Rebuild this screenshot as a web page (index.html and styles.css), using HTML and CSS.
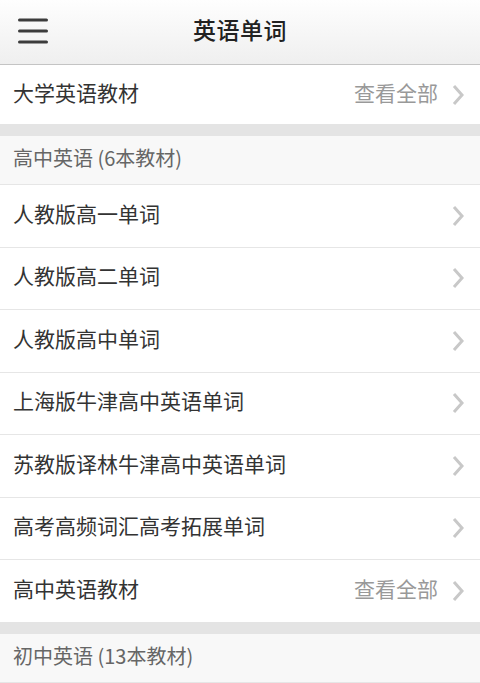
FILE: index.html
```html
<!DOCTYPE html>
<html lang="zh-CN">
<head>
<meta charset="utf-8">
<title>英语单词</title>
<link rel="stylesheet" href="styles.css">
</head>
<body>
<header class="topbar">
  <div class="menu">
    <svg width="30" height="26" viewBox="0 0 30 26">
      <rect x="0" y="0.5" width="30" height="3" rx="1.5" fill="#3c3c3c"/>
      <rect x="0" y="11.5" width="30" height="3" rx="1.5" fill="#3c3c3c"/>
      <rect x="0" y="22.5" width="30" height="3" rx="1.5" fill="#3c3c3c"/>
    </svg>
  </div>
  <h1 class="title">英语单词</h1>
</header>

<div class="row first">
  <span class="label">大学英语教材</span>
  <span class="more">查看全部</span>
  <svg class="chev" width="12" height="22" viewBox="0 0 12 22"><path d="M2 2 L10 11 L2 20" fill="none" stroke="#c8c8c8" stroke-width="3"/></svg>
</div>

<div class="band"></div>
<div class="section">高中英语 (6本教材)</div>

<div class="row"><span class="label">人教版高一单词</span><svg class="chev" width="12" height="22" viewBox="0 0 12 22"><path d="M2 2 L10 11 L2 20" fill="none" stroke="#c8c8c8" stroke-width="3"/></svg></div>
<div class="row"><span class="label">人教版高二单词</span><svg class="chev" width="12" height="22" viewBox="0 0 12 22"><path d="M2 2 L10 11 L2 20" fill="none" stroke="#c8c8c8" stroke-width="3"/></svg></div>
<div class="row"><span class="label">人教版高中单词</span><svg class="chev" width="12" height="22" viewBox="0 0 12 22"><path d="M2 2 L10 11 L2 20" fill="none" stroke="#c8c8c8" stroke-width="3"/></svg></div>
<div class="row"><span class="label">上海版牛津高中英语单词</span><svg class="chev" width="12" height="22" viewBox="0 0 12 22"><path d="M2 2 L10 11 L2 20" fill="none" stroke="#c8c8c8" stroke-width="3"/></svg></div>
<div class="row"><span class="label">苏教版译林牛津高中英语单词</span><svg class="chev" width="12" height="22" viewBox="0 0 12 22"><path d="M2 2 L10 11 L2 20" fill="none" stroke="#c8c8c8" stroke-width="3"/></svg></div>
<div class="row"><span class="label">高考高频词汇高考拓展单词</span><svg class="chev" width="12" height="22" viewBox="0 0 12 22"><path d="M2 2 L10 11 L2 20" fill="none" stroke="#c8c8c8" stroke-width="3"/></svg></div>
<div class="row last"><span class="label">高中英语教材</span><span class="more">查看全部</span><svg class="chev" width="12" height="22" viewBox="0 0 12 22"><path d="M2 2 L10 11 L2 20" fill="none" stroke="#c8c8c8" stroke-width="3"/></svg></div>

<div class="band"></div>
<div class="section">初中英语 (13本教材)</div>
</body>
</html>
```

FILE: styles.css
```css
html, body {
  margin: 0;
  padding: 0;
  background: #fff;
  font-family: "Noto Sans CJK SC", "Noto Sans", sans-serif;
  width: 480px;
  overflow: hidden;
}

.topbar {
  box-sizing: border-box;
  height: 65px;
  padding-bottom: 6px;
  border-bottom: 1px solid #c4c4c4;
  background: linear-gradient(#fefefe, #efefef);
  display: flex;
  align-items: center;
  justify-content: center;
  position: relative;
}

.menu {
  position: absolute;
  left: 18px;
  top: 18px;
  display: flex;
}

.title {
  margin: 0;
  font-size: 23px;
  font-weight: 500;
  color: #222;
  letter-spacing: 0.5px;
}

.row {
  box-sizing: border-box;
  display: flex;
  align-items: center;
  height: 62.5px;
  padding: 0 16px 5px 13px;
  border-bottom: 1px solid #e6e6e6;
  background: #fff;
}

.row .chev {
  margin-top: 5px;
}

.row.first {
  height: 59px;
  border-bottom: none;
}

.row.last {
  height: 62px;
  border-bottom: none;
}

.label {
  flex: 1;
  font-size: 21px;
  line-height: 1;
  color: #333;
}

.more {
  font-size: 21px;
  line-height: 1;
  color: #999;
  margin-right: 14px;
}

.chev {
  display: block;
}

.band {
  height: 12px;
  background: #e4e4e4;
}

.section {
  box-sizing: border-box;
  height: 49px;
  display: flex;
  align-items: center;
  padding: 0 0 4px 13px;
  font-size: 20px;
  line-height: 1;
  color: #666;
  background: #f8f8f8;
  border-bottom: 1px solid #e6e6e6;
}
```
